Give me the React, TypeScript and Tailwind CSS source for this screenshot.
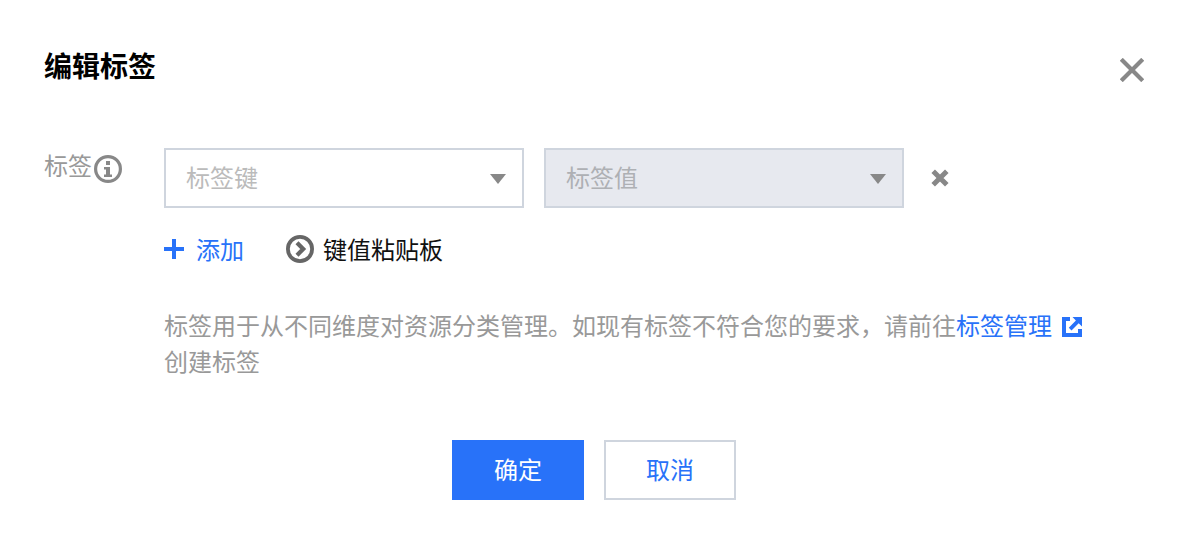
import type { SelectHTMLAttributes } from "react";

type TagSelectProps = SelectHTMLAttributes<HTMLSelectElement> & {
  label: string;
};

function TagSelect({ label, ...rest }: TagSelectProps) {
  return (
    <div className="relative w-[360px]">
      <select
        aria-label={label}
        defaultValue=""
        className="block h-[60px] w-full appearance-none rounded-none border-2 border-[#cfd5de] bg-white pt-0.5 pr-12 pl-5 text-2xl text-[#bbb] opacity-100 outline-none disabled:bg-[#e7e9ef] disabled:text-[#aeb0b4]"
        {...rest}
      >
        <option value="">{label}</option>
      </select>
      <svg
        className="pointer-events-none absolute top-[26px] right-[18px] h-[10px] w-4"
        viewBox="0 0 16 10"
        fill="#888"
      >
        <path d="M0 0h16L8 10z" />
      </svg>
    </div>
  );
}

function InfoIcon() {
  return (
    <svg className="h-7 w-7" viewBox="0 0 28 28" fill="none">
      <circle cx="14" cy="14" r="12.4" stroke="#888" strokeWidth="3.2" />
      <path d="M12 6h4v4h-4zM10 12h6v7.500h2v2.500h-8v-2.500h2v-5h-2z" fill="#888" />
    </svg>
  );
}

function PlusIcon() {
  return (
    <svg className="mb-1 h-5 w-5" viewBox="0 0 20 20" fill="#2872f9">
      <path d="M8 0h4v8h8v4h-8v8H8v-8H0V8h8z" />
    </svg>
  );
}

function CircleArrowIcon() {
  return (
    <svg className="mb-1 h-7 w-7" viewBox="0 0 28 28" fill="none" stroke="#666">
      <circle cx="14" cy="14" r="12.100" strokeWidth="3.800" />
      <path d="M11 7.800 17.200 14 11 20.200" strokeWidth="4.200" />
    </svg>
  );
}

function ExternalIcon() {
  return (
    <svg className="ml-2.5 inline h-5 w-5 align-[-2px]" viewBox="0 0 20 20" fill="#2872f9">
      <path d="M0 0h8v4H4v12h12v-4h4v8H0z" />
      <path d="M10.500 0H20v9.500l-3.300-3.300-7.200 7.200-2.700-2.700 7.100-7.200z" />
    </svg>
  );
}

export default function App() {
  return (
    <div
      role="dialog"
      aria-labelledby="dialog-title"
      className="bg-white pt-12 pr-12 pb-[46px] pl-11 font-['Liberation_Sans','Noto_Sans_CJK_SC',sans-serif] text-2xl text-black"
    >
      {/* Header */}
      <header className="flex h-11 items-start justify-between">
        <h1 id="dialog-title" className="text-[28px] leading-10 font-bold">
          编辑标签
        </h1>
        <button type="button" aria-label="关闭" className="self-center">
          <svg className="h-6 w-6" viewBox="0 0 24 24" stroke="#888" strokeWidth="4.200">
            <path d="M1.300 1.300l21.400 21.400M22.700 1.300L1.300 22.700" />
          </svg>
        </button>
      </header>

      {/* Tag form */}
      <div className="mt-14 flex">
        <div className="flex w-[120px] shrink-0 items-start gap-0.5 text-[#999]">
          <span className="leading-[38px]">标签</span>
          <button type="button" aria-label="说明" className="mt-[7px]">
            <InfoIcon />
          </button>
        </div>

        <div className="min-w-0 flex-1">
          <div className="flex items-center gap-5">
            <TagSelect label="标签键" />
            <TagSelect label="标签值" disabled />
            <button type="button" aria-label="删除" className="ml-[7px]">
              <svg
                className="h-[18px] w-[18px]"
                viewBox="0 0 18 18"
                stroke="#888"
                strokeWidth="5"
              >
                <path d="M2.200 2.200l13.600 13.600M15.800 2.200L2.200 15.800" />
              </svg>
            </button>
          </div>

          <div className="mt-6 flex items-center gap-[42px] leading-[38px]">
            <button type="button" className="flex items-center gap-3 text-[#2872f9]">
              <PlusIcon />
              添加
            </button>
            <button type="button" className="flex items-center gap-[9px] text-[#111]">
              <CircleArrowIcon />
              键值粘贴板
            </button>
          </div>

          <p className="mt-[39px] pr-12 leading-9 text-[#999]">
            标签用于从不同维度对资源分类管理。如现有标签不符合您的要求，请前往
            <a href="#tags" className="text-[#2872f9]">
              标签管理
              <ExternalIcon />
            </a>{" "}
            创建标签
          </p>
        </div>
      </div>

      {/* Footer */}
      <footer className="mt-[59px] flex justify-center gap-5">
        <button type="submit" className="h-[60px] w-[132px] bg-[#2872f9] pt-0.5 text-white">
          确定
        </button>
        <button
          type="button"
          className="h-[60px] w-[132px] border-2 border-[#cfd5de] bg-white pt-0.5 text-[#2872f9]"
        >
          取消
        </button>
      </footer>
    </div>
  );
}
